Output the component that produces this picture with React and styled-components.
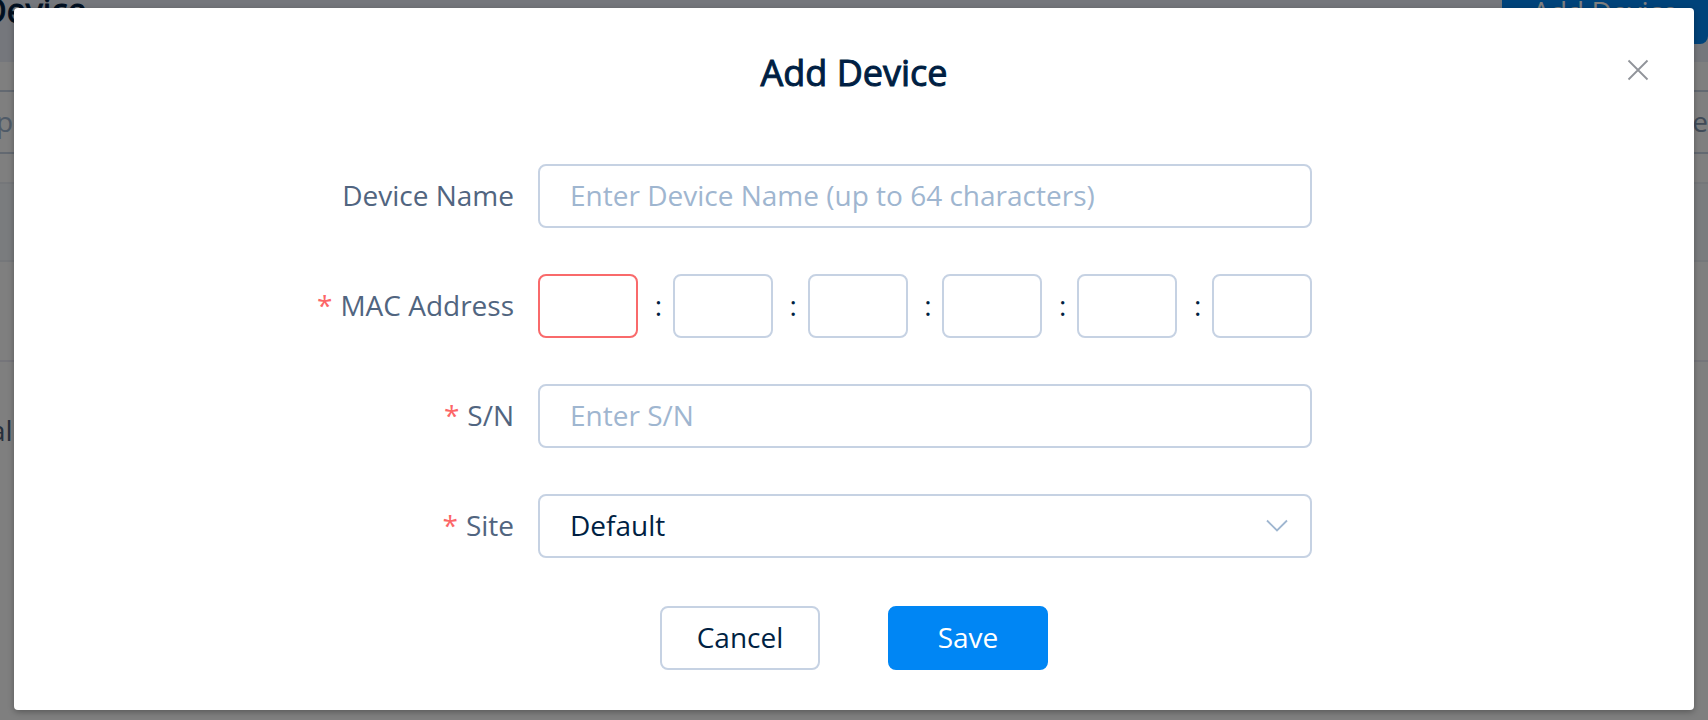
import React, { Fragment, useState } from 'react';
import styled, { createGlobalStyle } from 'styled-components';

const GlobalStyle = createGlobalStyle`
  *, *::before, *::after { box-sizing: border-box; }
  body {
    margin: 0;
    background: #ffffff;
    color: #001f43;
    font-family: "Open Sans", "Noto Sans", sans-serif;
    font-size: 28px;
    line-height: 38px;
  }
  button, input, select { font: inherit; color: inherit; }
`;

const Screen = styled.div`
  position: relative;
  min-height: 100vh;
  overflow: hidden;
`;

const Page = styled.div`
  position: absolute;
  inset: 0;
  overflow: hidden;
`;

const PageHeader = styled.header`
  display: flex;
  align-items: center;
  justify-content: space-between;
  height: 82px;
  margin: -20px 0 28px -18px;
  padding-bottom: 18px;
  background: #ebeef8;
`;

const PageTitle = styled.h1`
  margin: 0;
  padding-bottom: 4px;
  font-size: 34px;
  font-weight: 400;
  -webkit-text-stroke: 1px currentColor;
`;

const PageAction = styled.button`
  width: 206px;
  height: 64px;
  padding: 0 0 2px;
  border: 0;
  border-radius: 8px;
  background: #0086f4;
  color: #ffffff;
`;

const FilterBar = styled.div`
  display: flex;
  align-items: center;
  justify-content: space-between;
  height: 64px;
  margin: 0 0 28px;
  padding-bottom: 2px;
  border: solid #c6d2e3;
  border-width: 2px 0;
  color: #9fb6d0;
`;

const FilterStart = styled.span`
  margin-left: -4px;
`;

const FilterEnd = styled.span`
  color: #8296b0;
`;

const TableHead = styled.div`
  height: 80px;
  border: solid #ebeef5;
  border-width: 2px 0;
  background: #f5f8fd;
`;

const TableRow = styled.div`
  display: flex;
  align-items: ${(p) => (p.$tall ? 'center' : 'stretch')};
  height: ${(p) => (p.$tall ? '136px' : '100px')};
  margin-left: -10px;
  border-bottom: ${(p) => (p.$tall ? '0' : '2px solid #ebeaf5')};
  color: #4d6079;
`;

const Overlay = styled.div`
  position: relative;
  min-height: 100vh;
  padding: 8px 14px 10px;
  background: rgba(0, 0, 0, 0.5);
`;

const Dialog = styled.section`
  position: relative;
  padding: 40px 0;
  border-radius: 4px;
  background: #ffffff;
  box-shadow: 0 2px 6px rgba(0, 0, 0, 0.3);
`;

const DialogTitle = styled.h2`
  margin: 0 0 66px;
  font-size: 36px;
  font-weight: 400;
  line-height: 50px;
  text-align: center;
  -webkit-text-stroke: 1px currentColor;
`;

const CloseButton = styled.button`
  position: absolute;
  top: 46px;
  right: 40px;
  display: flex;
  padding: 4px;
  border: 0;
  background: none;
  color: #909399;
`;

const Fields = styled.div`
  display: grid;
  gap: 46px;
`;

const Row = styled.div`
  display: grid;
  grid-template-columns: 524fr 774fr 382fr;
  align-items: center;
`;

const Label = styled.label`
  padding: 0 24px 2px 0;
  color: #516580;
  text-align: right;
  white-space: nowrap;

  &::before {
    content: ${(p) => (p.$required ? '"*"' : 'none')};
    margin-right: 8px;
    color: #fc6667;
  }
`;

const TextInput = styled.input`
  width: 100%;
  height: 64px;
  padding: 0 30px 2px;
  border: 2px solid #c6d2e3;
  border-radius: 8px;
  background: #ffffff;
  outline: 0;

  &::placeholder { color: #9fb6d0; opacity: 1; }
`;

const MacGroup = styled.div`
  display: flex;
  align-items: center;
`;

const MacInput = styled(TextInput)`
  flex: 0 1 100px;
  min-width: 0;
  padding: 0 16px 2px;
  border-color: ${(p) => (p.$invalid ? '#f96a6b' : '#c6d2e3')};
`;

const Colon = styled.span`
  flex: 1;
  padding: 0 0 2px 6px;
  text-align: center;
`;

const SelectBox = styled.div`
  position: relative;
`;

const Select = styled.select`
  display: block;
  width: 100%;
  height: 64px;
  padding: 0 64px 2px 30px;
  border: 2px solid #c6d2e3;
  border-radius: 8px;
  background: #ffffff;
  appearance: none;
  outline: 0;
`;

const Chevron = styled.svg`
  position: absolute;
  top: 25px;
  right: 24px;
  pointer-events: none;
`;

const Actions = styled.div`
  display: flex;
  justify-content: center;
  gap: 68px;
  margin-top: 48px;
`;

const Button = styled.button`
  width: 160px;
  height: 64px;
  padding: 0 0 2px;
  border: 2px solid ${(p) => (p.$primary ? '#0086f4' : '#c6d2e3')};
  border-radius: 8px;
  background: ${(p) => (p.$primary ? '#0086f4' : '#ffffff')};
  color: ${(p) => (p.$primary ? '#ffffff' : '#001f43')};
`;

const OCTETS = [1, 2, 3, 4, 5, 6];

export default function App() {
  const [mac, setMac] = useState(OCTETS.map(() => ''));
  const updateMac = (index, value) =>
    setMac(mac.map((part, i) => (i === index ? value : part)));

  return (
    <>
      <GlobalStyle />
      <Screen>
        <Page aria-hidden="true">
          <PageHeader>
            <PageTitle>Device</PageTitle>
            <PageAction type="button" tabIndex={-1}>Add Device</PageAction>
          </PageHeader>
          <FilterBar>
            <FilterStart>p</FilterStart>
            <FilterEnd>e</FilterEnd>
          </FilterBar>
          <TableHead />
          <TableRow />
          <TableRow $tall>al</TableRow>
        </Page>

        <Overlay>
          <Dialog role="dialog" aria-modal="true" aria-labelledby="dialog-title">
            <DialogTitle id="dialog-title">Add Device</DialogTitle>
            <CloseButton type="button" aria-label="Close">
              <svg width="24" height="24" viewBox="0 0 24 24" fill="none" stroke="currentColor" strokeWidth="1.8">
                <path d="M2.5 2.5 21.5 21.5M21.5 2.5 2.5 21.5" />
              </svg>
            </CloseButton>

            <form onSubmit={(e) => e.preventDefault()}>
              <Fields>
                <Row>
                  <Label htmlFor="device-name">Device Name</Label>
                  <TextInput
                    id="device-name"
                    maxLength={64}
                    placeholder="Enter Device Name (up to 64 characters)"
                  />
                </Row>
                <Row>
                  <Label htmlFor="mac-1" $required>MAC Address</Label>
                  <MacGroup>
                    {OCTETS.map((n, i) => (
                      <Fragment key={n}>
                        {i > 0 && <Colon>:</Colon>}
                        <MacInput
                          id={`mac-${n}`}
                          aria-label={`MAC Address part ${n}`}
                          maxLength={2}
                          $invalid={i === 0}
                          value={mac[i]}
                          onChange={(e) => updateMac(i, e.target.value)}
                        />
                      </Fragment>
                    ))}
                  </MacGroup>
                </Row>
                <Row>
                  <Label htmlFor="serial" $required>S/N</Label>
                  <TextInput id="serial" placeholder="Enter S/N" />
                </Row>
                <Row>
                  <Label htmlFor="site" $required>Site</Label>
                  <SelectBox>
                    <Select id="site" defaultValue="default">
                      <option value="default">Default</option>
                    </Select>
                    <Chevron width="22" height="14" viewBox="0 0 22 14" fill="none" stroke="#9fb6d0" strokeWidth="1.8">
                      <path d="M1 1.5 11 11.5 21 1.5" />
                    </Chevron>
                  </SelectBox>
                </Row>
              </Fields>
              <Actions>
                <Button type="button">Cancel</Button>
                <Button type="submit" $primary>Save</Button>
              </Actions>
            </form>
          </Dialog>
        </Overlay>
      </Screen>
    </>
  );
}
